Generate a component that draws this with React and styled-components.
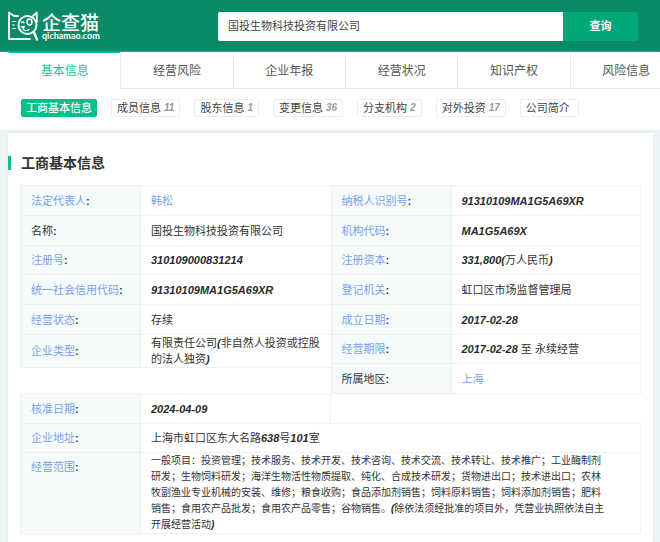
import React from "react";
import styled, { createGlobalStyle } from "styled-components";

const sans = `"Liberation Sans", "Noto Sans CJK SC", sans-serif`;
const line = "#edf1f1";
const link = "#7b9fee";

const GlobalStyle = createGlobalStyle`
  *, *::before, *::after { box-sizing: border-box; }
  body {
    margin: 0;
    background: #ecf4f7;
    color: #333;
    font: 11px/16px ${sans};
    overflow-x: hidden;
  }
  a { color: inherit; text-decoration: none; }
`;

const Page = styled.div`
  min-height: 100vh;
  display: flex;
  flex-direction: column;
`;

const TopBar = styled.header`
  display: flex;
  align-items: center;
  height: 52px;
  padding: 0 22px 0 8px;
  background: #0b8a68;
`;

const Brand = styled.a`
  display: flex;
  align-items: center;
  gap: 4px;
  flex: 0 0 210px;
  color: #fff;
`;

const CatIcon = styled.svg`
  width: 30px;
  height: 31px;
  fill: none;
  stroke: #fff;
  stroke-linecap: round;
  stroke-linejoin: round;
`;

const BrandText = styled.span`
  display: flex;
  flex-direction: column;
`;

const BrandName = styled.span`
  font: 500 19px/20px "Noto Sans CJK SC", sans-serif;
`;

const BrandDomain = styled.span`
  font: 700 9px/8px Lato, sans-serif;
`;

const Search = styled.form`
  display: flex;
  flex: 1;
  height: 29px;
`;

const SearchInput = styled.input`
  flex: 1;
  min-width: 0;
  padding: 0 10px;
  border: 0;
  border-radius: 2px 0 0 2px;
  background: #fff;
  color: #444;
  font: 11px/16px ${sans};
`;

const SearchButton = styled.button`
  width: 75px;
  padding: 0;
  border: 0;
  border-radius: 0 2px 2px 0;
  background: #00a878;
  color: #fff;
  font: 700 11px/16px ${sans};
`;

const NavPanel = styled.div`
  position: relative;
  overflow: hidden;
  background: #fff;
  box-shadow: 0 1px 3px #e3eeee;
`;

const Tabs = styled.nav`
  display: grid;
  grid-template-columns: repeat(6, 1fr);
  margin: 0 -22px 0 8px;
`;

const Tab = styled.a`
  display: flex;
  align-items: center;
  justify-content: center;
  height: 37px;
  border-top: 1px solid ${(p) => (p.$active ? "#10c492" : "transparent")};
  border-left: 1px solid ${(p) => (p.$active ? "transparent" : "#ebebeb")};
  border-bottom: 1px solid ${(p) => (p.$active ? "transparent" : "#ebebeb")};
  color: ${(p) => (p.$active ? "#1cc497" : "#555")};
  font-size: 12px;
`;

const SubTabs = styled.nav`
  display: flex;
  gap: 14px;
  padding: 10px 21px 13px;
`;

const SubTab = styled.a`
  display: flex;
  align-items: center;
  gap: 3px;
  height: 18px;
  padding: 0 ${(p) => (p.$active ? 4 : 5)}px;
  border: 1px solid ${(p) => (p.$active ? "#05c08b" : "#eee")};
  border-radius: 2px;
  background: ${(p) => (p.$active ? "#05c08b" : "#fff")};
  color: ${(p) => (p.$active ? "#fff" : "#444")};
  font-weight: ${(p) => (p.$active ? 500 : 400)};
  white-space: nowrap;
`;

const Count = styled.em`
  color: #999;
  font-size: 10px;
  font-weight: 700;
`;

const Card = styled.main`
  flex: 1;
  margin: 3px 7px 0 8px;
  padding-bottom: 10px;
  background: #fff;
  box-shadow: 0 0 3px #dfeaee;
`;

const SectionTitle = styled.h1`
  display: flex;
  align-items: center;
  gap: 10px;
  margin: 0;
  padding: 20px 0 12px;
  font-size: 14px;
  font-weight: 700;
  line-height: 20px;

  &::before {
    content: "";
    width: 3px;
    height: 14px;
    background: #12bd8c;
  }
`;

const Details = styled.div`
  display: grid;
  grid-template-columns: 1fr 1fr;
  align-items: start;
  margin: 0 12px;
`;

const InfoTable = styled.table`
  width: 100%;
  table-layout: fixed;
  border-spacing: 0;
  border: 1px solid ${line};
  border-width: 1px ${(p) => (p.$open ? 0 : "1px")} 0 0;
`;

const WideTable = styled(InfoTable)`
  grid-column: 1 / -1;
  margin-top: -1px;
`;

const InfoRow = styled.tr`
  height: ${(p) => (p.$compact ? 29 : 30)}px;

  &:nth-child(3n) {
    height: 29px;
  }
`;

const LabelCell = styled.th`
  width: 121px;
  padding: ${(p) => (p.$top ? "6px" : 0)} 0 0 10px;
  border: 1px solid ${line};
  border-width: 0 1px 1px 1px;
  background: #f5fbfa;
  font-weight: 400;
  text-align: left;
  vertical-align: ${(p) => (p.$top ? "top" : "middle")};
`;

const Colon = styled.span`
  font-weight: 700;
`;

const ValueCell = styled.td`
  padding: 0 8px 0 10px;
  border-bottom: 1px solid ${line};
  color: #333;
`;

const TextLink = styled.a`
  color: ${link};
`;

const Latin = styled.em`
  color: #2b2b2b;
  font-weight: 700;
`;

const Scope = styled.p`
  max-width: 457px;
  margin: 0;
  font-size: 10px;
`;

const tabs = ["基本信息", "经营风险", "企业年报", "经营状况", "知识产权", "风险信息"];

const subTabs = [
  ["工商基本信息"],
  ["成员信息", 11],
  ["股东信息", 1],
  ["变更信息", 36],
  ["分支机构", 2],
  ["对外投资", 17],
  ["公司简介", ""],
];

const leftRows = [
  { label: "法定代表人", value: "韩松", linked: true },
  { label: "名称", value: "国投生物科技投资有限公司", plain: true },
  { label: "注册号", value: "310109000831214" },
  { label: "统一社会信用代码", value: "91310109MA1G5A69XR" },
  { label: "经营状态", value: "存续" },
  { label: "企业类型", value: "有限责任公司(非自然人投资或控股的法人独资)" },
];

const rightRows = [
  { label: "纳税人识别号", value: "91310109MA1G5A69XR" },
  { label: "机构代码", value: "MA1G5A69X" },
  { label: "注册资本", value: "331,800(万人民币)" },
  { label: "登记机关", value: "虹口区市场监督管理局" },
  { label: "成立日期", value: "2017-02-28" },
  { label: "经营期限", value: "2017-02-28 至 永续经营" },
  { label: "所属地区", value: "上海", plain: true, linked: true },
];

const approvalRows = [{ label: "核准日期", value: "2024-04-09" }];

const wideRows = [
  { label: "企业地址", value: "上海市虹口区东大名路638号101室" },
  {
    label: "经营范围",
    long: true,
    value:
      "一般项目：投资管理；技术服务、技术开发、技术咨询、技术交流、技术转让、技术推广；工业酶制剂研发；生物饲料研发；海洋生物活性物质提取、纯化、合成技术研发；货物进出口；技术进出口；农林牧副渔业专业机械的安装、维修；粮食收购；食品添加剂销售；饲料原料销售；饲料添加剂销售；肥料销售；食用农产品批发；食用农产品零售；谷物销售。(除依法须经批准的项目外，凭营业执照依法自主开展经营活动)",
  },
];

// Digits, Latin letters and ASCII punctuation are set in bold italic.
function Mixed({ text }) {
  return text
    .split(/([\x21-\x7e]+)/)
    .map((part, i) => (i % 2 ? <Latin key={i}>{part}</Latin> : part));
}

function Value({ row }) {
  if (row.linked) return <TextLink href="#">{row.value}</TextLink>;
  if (row.long) return <Scope><Mixed text={row.value} /></Scope>;
  return <Mixed text={row.value} />;
}

function Rows({ rows, compact }) {
  return (
    <tbody>
      {rows.map((row) => (
        <InfoRow key={row.label} $compact={compact}>
          <LabelCell scope="row" $top={row.long}>
            {row.plain ? row.label : <TextLink href="#">{row.label}</TextLink>}
            <Colon>:</Colon>
          </LabelCell>
          <ValueCell><Value row={row} /></ValueCell>
        </InfoRow>
      ))}
    </tbody>
  );
}

function CatLogo() {
  return (
    <CatIcon viewBox="0 0 30 31" aria-hidden="true">
      <path d="M10 5H6L1 1.5V28H22" strokeWidth="1.8" />
      <path d="M25 5L28.8 1.5V11" strokeWidth="1.8" />
      <circle cx="19.5" cy="14" r="9" strokeWidth="2" />
      <path d="M26 21.5L29 28.5" strokeWidth="2.4" />
      <path d="M4.5 10.5H7.5M4.5 14H6.5M4.5 17.5H7.5" strokeWidth="1" />
      <ellipse cx="21.5" cy="11" rx="2.4" ry="3" strokeWidth="1.6" />
      <path d="M13.5 11.5C14.5 10.5 15.5 10.8 16 12" strokeWidth="1.3" />
      <path d="M13.5 15.5H17L15.2 17.3Z" fill="#fff" strokeWidth="1" />
      <path d="M15.2 18C16 20 19 20 21 18.5" strokeWidth="1.2" />
    </CatIcon>
  );
}

export default function App() {
  return (
    <Page>
      <GlobalStyle />
      <TopBar>
        <Brand href="#">
          <CatLogo />
          <BrandText>
            <BrandName>企查猫</BrandName>
            <BrandDomain>qichamao.com</BrandDomain>
          </BrandText>
        </Brand>
        <Search onSubmit={(e) => e.preventDefault()}>
          <SearchInput aria-label="企业名称" defaultValue="国投生物科技投资有限公司" />
          <SearchButton type="submit">查询</SearchButton>
        </Search>
      </TopBar>
      <NavPanel>
        <Tabs>
          {tabs.map((name, i) => (
            <Tab key={name} href="#" $active={i === 0}>{name}</Tab>
          ))}
        </Tabs>
        <SubTabs>
          {subTabs.map(([name, count], i) => (
            <SubTab key={name} href="#" $active={i === 0}>
              {name}
              {count !== undefined && <Count>{count}</Count>}
            </SubTab>
          ))}
        </SubTabs>
      </NavPanel>
      <Card>
        <SectionTitle>工商基本信息</SectionTitle>
        <Details>
          <InfoTable $open><Rows rows={leftRows} /></InfoTable>
          <InfoTable><Rows rows={rightRows} /></InfoTable>
          <InfoTable><Rows rows={approvalRows} compact /></InfoTable>
          <WideTable><Rows rows={wideRows} compact /></WideTable>
        </Details>
      </Card>
    </Page>
  );
}
